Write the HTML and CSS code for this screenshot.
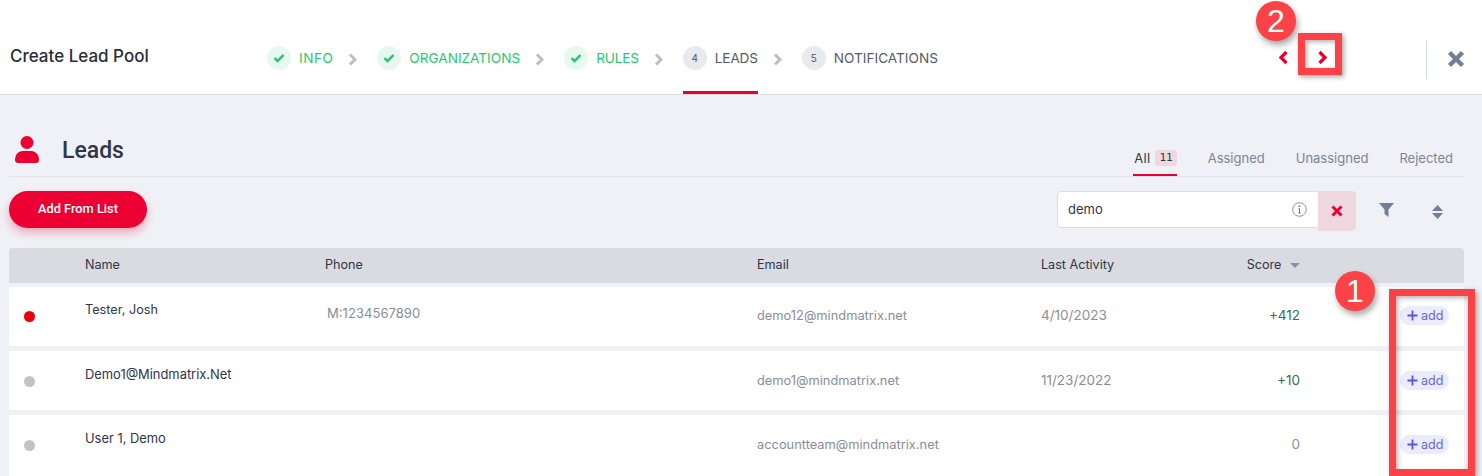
FILE: index.html
```html
<!DOCTYPE html>
<html lang="en">
<head>
<meta charset="utf-8">
<title>Create Lead Pool</title>
<link rel="stylesheet" href="styles.css">
</head>
<body>
<header class="topbar">
  <div class="page-title">Create Lead Pool</div>
  <nav class="steps">
    <div class="step done"><span class="step-dot"><svg width="12" height="10" viewBox="0 0 12 10"><path d="M1.500 5l3 3 6-6" fill="none" stroke="#1fc36b" stroke-width="2.400"/></svg></span><span class="step-label wide">INFO</span></div>
    <svg class="step-chev" width="9" height="13" viewBox="0 0 9 13"><path d="M2 1.500l5 5-5 5" fill="none" stroke="#b9bec9" stroke-width="3"/></svg>
    <div class="step done"><span class="step-dot"><svg width="12" height="10" viewBox="0 0 12 10"><path d="M1.500 5l3 3 6-6" fill="none" stroke="#1fc36b" stroke-width="2.400"/></svg></span><span class="step-label">ORGANIZATIONS</span></div>
    <svg class="step-chev" width="9" height="13" viewBox="0 0 9 13"><path d="M2 1.500l5 5-5 5" fill="none" stroke="#b9bec9" stroke-width="3"/></svg>
    <div class="step done"><span class="step-dot"><svg width="12" height="10" viewBox="0 0 12 10"><path d="M1.500 5l3 3 6-6" fill="none" stroke="#1fc36b" stroke-width="2.400"/></svg></span><span class="step-label tight">RULES</span></div>
    <svg class="step-chev" width="9" height="13" viewBox="0 0 9 13"><path d="M2 1.500l5 5-5 5" fill="none" stroke="#b9bec9" stroke-width="3"/></svg>
    <div class="step active"><span class="step-dot">4</span><span class="step-label tight">LEADS</span></div>
    <svg class="step-chev" width="9" height="13" viewBox="0 0 9 13"><path d="M2 1.500l5 5-5 5" fill="none" stroke="#b9bec9" stroke-width="3"/></svg>
    <div class="step"><span class="step-dot">5</span><span class="step-label">NOTIFICATIONS</span></div>
  </nav>
  <div class="pager">
    <svg width="11" height="15" viewBox="0 0 11 15"><path d="M8.500 2l-5.500 5.500 5.500 5.500" fill="none" stroke="#e8002e" stroke-width="3.300"/></svg>
    <svg width="11" height="15" viewBox="0 0 11 15"><path d="M2.500 2l5.500 5.500-5.500 5.500" fill="none" stroke="#e8002e" stroke-width="3.300"/></svg>
  </div>
  <div class="close-wrap">
    <svg width="18" height="18" viewBox="0 0 18 18"><path d="M2.500 2.500l13 13M15.500 2.500l-13 13" fill="none" stroke="#718096" stroke-width="4.500"/></svg>
  </div>
</header>

<main class="content">
  <section class="section-head">
    <div class="section-title">
      <svg class="person" width="24" height="27" viewBox="0 0 24 27"><circle cx="12" cy="6.500" r="6.500" fill="#ec0033"/><path d="M0 24c0-5.500 3.500-9 7.500-9h9c4 0 7.500 3.500 7.500 9 0 1.700-1.300 3-3 3H3c-1.700 0-3-1.300-3-3z" fill="#ec0033"/></svg>
      <h1>Leads</h1>
    </div>
    <div class="tabs">
      <div class="tab current">All <span class="tab-count">11</span></div>
      <div class="tab">Assigned</div>
      <div class="tab">Unassigned</div>
      <div class="tab">Rejected</div>
    </div>
  </section>

  <section class="toolbar">
    <button class="btn-add-list">Add From List</button>
    <div class="tools">
      <div class="search">
        <div class="search-box"><span>demo</span>
          <svg width="15" height="15" viewBox="0 0 15 15"><circle cx="7.500" cy="7.500" r="6.800" fill="none" stroke="#8f93a0"/><path d="M7.500 6.500v4.500M6.300 11h2.400M6.500 6.500h1" fill="none" stroke="#6f7482"/><circle cx="7.500" cy="4.200" r=".9" fill="#6f7482"/></svg>
        </div>
        <div class="search-clear"><svg width="12" height="12" viewBox="0 0 12 12"><path d="M1.500 1.500l9 9M10.500 1.500l-9 9" fill="none" stroke="#ec0033" stroke-width="3"/></svg></div>
      </div>
      <svg class="filter" width="15" height="14" viewBox="0 0 15 14"><path d="M0 0h15L9.500 6.500V14L5.500 11V6.500z" fill="#718096"/></svg>
      <svg class="sort" width="11" height="14" viewBox="0 0 11 14"><path d="M5.500 0L11 6H0zM0 8h11L5.500 14z" fill="#718096"/></svg>
    </div>
  </section>

  <div class="table">
    <div class="row head">
      <div></div><div>Name</div><div>Phone</div><div>Email</div><div>Last Activity</div>
      <div class="score">Score <svg class="sort-caret" width="10" height="5" viewBox="0 0 10 5"><path d="M0 0h10L5 5z" fill="#8a93a6"/></svg></div><div></div>
    </div>
    <div class="row first">
      <div><span class="dot hot"></span></div><div class="name">Tester, Josh</div><div class="phone">M:1234567890</div><div class="email">demo12@mindmatrix.net</div><div class="date">4/10/2023</div><div class="score pos">+412</div><div><span class="add"><svg width="11" height="11" viewBox="0 0 11 11"><path d="M5.500 .5v10M.5 5.500h10" stroke="#5a55e0" stroke-width="1.800"/></svg>add</span></div>
    </div>
    <div class="row">
      <div><span class="dot"></span></div><div class="name">Demo1@Mindmatrix.Net</div><div class="phone"></div><div class="email">demo1@mindmatrix.net</div><div class="date">11/23/2022</div><div class="score pos">+10</div><div><span class="add"><svg width="11" height="11" viewBox="0 0 11 11"><path d="M5.500 .5v10M.5 5.500h10" stroke="#5a55e0" stroke-width="1.800"/></svg>add</span></div>
    </div>
    <div class="row last">
      <div><span class="dot"></span></div><div class="name">User 1, Demo</div><div class="phone"></div><div class="email">accountteam@mindmatrix.net</div><div class="date"></div><div class="score zero">0</div><div><span class="add"><svg width="11" height="11" viewBox="0 0 11 11"><path d="M5.500 .5v10M.5 5.500h10" stroke="#5a55e0" stroke-width="1.800"/></svg>add</span></div>
    </div>
  </div>
</main>

<div class="callout callout-two">2</div>
<div class="callout callout-one">1</div>
<div class="mark mark-next"></div>
<div class="mark mark-add"></div>
</body>
</html>
```
FILE: styles.css
```css
* { box-sizing: border-box; }
html, body { margin: 0; height: 476px; overflow: hidden; }
body { background: #f0f1f6; font-family: Inter, "Noto Sans", sans-serif; font-size: 12.6px; color: #2d3748; position: relative; }

.topbar { height: 95px; background: #fff; border-bottom: 1px solid #dcdde2; display: flex; align-items: center; }
.page-title { width: 267px; padding-left: 10px; padding-top: 17px; font-size: 17px; font-weight: 500; color: #2a2e38; }
.steps { display: flex; align-items: stretch; height: 94px; width: 1003px; }
.step { display: flex; align-items: center; gap: 8px; font-size: 13.6px; color: #565a68; padding-top: 25px; border-bottom: 3px solid transparent; height: 94px; }
.step.done { color: #1fc96f; }
.step.active { border-bottom-color: #e8002e; }
.step-dot { width: 24px; height: 24px; border-radius: 50%; background: #e9eaee; display: flex; align-items: center; justify-content: center; font-size: 10px; color: #50545f; }
.done .step-dot { background: #e6f8ef; }
.tight { letter-spacing: -.15px; }
.wide { letter-spacing: .5px; }
.step-chev { align-self: center; margin: 24px 20px 0 15px; }
.pager { width: 156px; display: flex; gap: 28px; padding: 21px 0 0 8px; }
.close-wrap { height: 39px; margin-top: 24px; border-left: 1px solid #d5d9e0; padding: 10px 0 0 20px; }

.content { padding: 0 18px 0 9px; }
.section-head { height: 82px; border-bottom: 1px solid #e3e4ea; display: flex; justify-content: space-between; align-items: flex-end; }
.section-title { display: flex; align-items: flex-start; gap: 23px; padding: 0 0 11px 6px; }
.person { margin-top: 3px; }
.section-title h1 { margin: 4px 0 0; font: 500 23px/28px Roboto, sans-serif; color: #2d3748; }
.tabs { display: flex; gap: 31px; padding-right: 11px; }
.tab { font-size: 13px; color: #7b8597; padding-top: 1px; height: 27px; display: flex; gap: 5px; }
.tab.current { color: #2d3748; border-bottom: 2px solid #e8002e; margin-bottom: -1px; padding-left: 1px; letter-spacing: .3px; }
.tab-count { background: #f0d8e0; border-radius: 3px; font: 11px/12px "DejaVu Sans Mono", monospace; letter-spacing: 0; padding: 2px 4px; height: 16px; }

.toolbar { display: flex; justify-content: space-between; align-items: flex-start; padding-top: 14px; height: 71px; }
.btn-add-list { width: 138px; height: 37px; border: 0; border-radius: 19px; padding: 0 0 2px; background: #ec0033; color: #fff; font: 500 12.8px Roboto, sans-serif; box-shadow: 0 5px 10px rgba(236,0,51,.3); }
.tools { display: flex; align-items: center; padding-right: 21px; }
.search { display: flex; width: 299px; }
.search-box { width: 263px; height: 37px; background: #fff; border: 1px solid #dcdde3; border-radius: 4px; display: flex; justify-content: space-between; align-items: center; padding: 0 12px 2px 10px; font-size: 13px; }
.search-box svg { margin-top: 2px; }
.search-clear { width: 38px; height: 40px; margin-left: -2px; background: #f0d8e0; border-radius: 0 4px 4px 0; display: flex; align-items: center; justify-content: center; }
.filter { margin: 0 0 2px 23px; }
.sort { margin: 1px 0 0 38px; }

.table { display: flex; flex-direction: column; gap: 5px; }
.row { display: grid; grid-template-columns: 76px 240px 432px 284px 184px 75px 164px; align-items: center; height: 59px; background: #fff; }
.row.first { padding-bottom: 2px; }
.row.last { height: 62px; padding-bottom: 3px; }
.row.head { height: 35px; padding-bottom: 2px; background: #d9dbe0; border-radius: 4px 4px 0 0; margin-bottom: -1px; }
.row > div:first-child { padding-left: 15px; }
.dot { display: block; width: 11px; height: 11px; border-radius: 50%; background: #c2c3ca; margin-top: 1px; }
.dot.hot { background: #e8000c; }
.name { align-self: start; padding-top: 16px; color: #2d3748; font-size: 12.9px; white-space: nowrap; }
.first .name { padding-top: 15px; font-size: 12.7px; }
.phone { align-self: start; padding: 18px 0 0 2px; color: #8a8d99; font-size: 13.1px; }
.email { color: #8a8d99; font-size: 12.85px; }
.date { color: #8a8d99; font-size: 13.5px; padding-bottom: 2px; }
.score { text-align: right; white-space: nowrap; font-size: 13.5px; }
.row.head .score { font-size: 12.6px; }
.sort-caret { margin-left: 5px; vertical-align: 1px; }
.pos, .zero { padding-bottom: 2px; }
.pos { color: #2f6f55; }
.zero { color: #8a93a6; }
.add { display: inline-flex; align-items: center; gap: 3px; margin-left: 100px; height: 19px; padding: 0 5px 0 7px; background: #ebebfb; color: #6a66e0; border-radius: 10px; font-size: 12.6px; }

.callout { position: absolute; width: 40px; height: 40px; border-radius: 50%; background: #fb4246; color: #fff; font: 32px/40px "Liberation Sans", sans-serif; text-align: center; box-shadow: 2px 4px 6px rgba(0,0,0,.35); }
.callout-two { left: 1256px; top: 1px; }
.callout-one { left: 1335px; top: 271px; }
.mark { position: absolute; border: 7px solid #fb4246; box-shadow: 2px 2px 5px rgba(0,0,0,.35), inset 2px 2px 5px rgba(0,0,0,.3); }
.mark-next { left: 1298px; top: 33px; width: 44px; height: 42px; }
.mark-add { left: 1389px; top: 289px; width: 86px; height: 187px; }
```
